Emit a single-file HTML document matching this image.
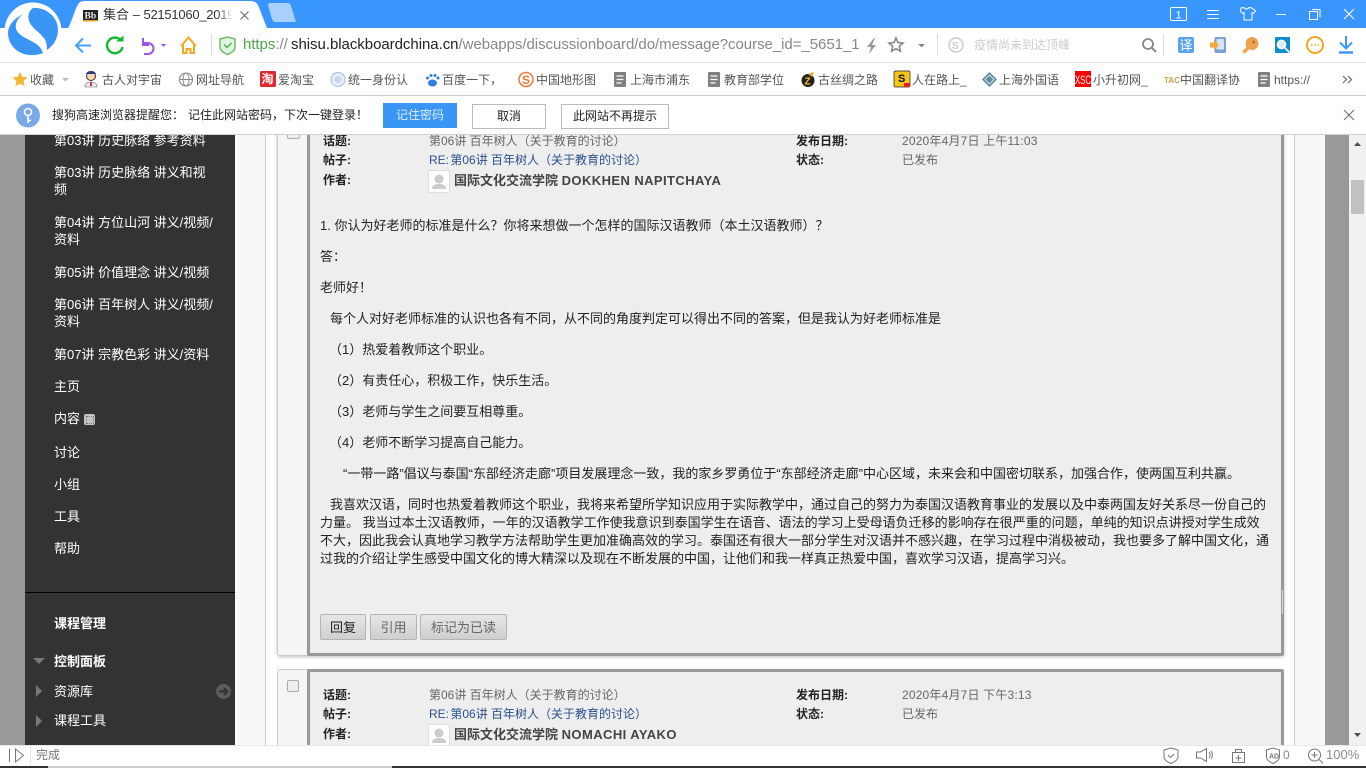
<!DOCTYPE html>
<html><head><meta charset="utf-8">
<style>
html,body{margin:0;padding:0;width:1366px;height:768px;overflow:hidden;background:#fff}
body{font-family:"Liberation Sans","Noto Sans CJK SC",sans-serif;font-size:12px;color:#333;position:relative}
.a,.t{position:absolute}
.t{white-space:nowrap;line-height:18px}
#page{position:absolute;left:0;top:135px;width:1366px;height:610px;overflow:hidden;background:#fff}
#in{position:absolute;left:0;top:-135px;width:1366px;height:768px}
.s{color:#fff;font-size:13px;left:54px}
.b{font-weight:bold}
.m{font-size:12px;color:#666}
.h{font-size:12px;color:#222;font-weight:bold;left:323px}
.v{left:429px}
.lnk{color:#2b4f8c}
.p{font-size:13px;color:#222}
.bm{font-size:12px;color:#555;top:71px}
.panel{position:absolute;left:277px;width:1007px;background:#f5f5f5;border-radius:3px}
.btn{position:absolute;top:614px;height:24px;line-height:25px;text-align:center;font-size:13px;color:#666;border:1px solid #b4b4b4;border-radius:2px;background:linear-gradient(#e6e6e6,#cfcfcf)}
.ib{position:absolute;top:104px;height:23px;line-height:23px;text-align:center;font-size:12px;color:#222;border:1px solid #bbb;background:#fff;box-sizing:content-box}
svg{position:absolute;overflow:visible}
</style></head><body>

<div id="page"><div id="in">
  <div class="a" style="left:0;top:135px;width:25px;height:610px;background:#999"></div>
  <div class="a" style="left:25px;top:135px;width:210px;height:610px;background:#333"></div>
  <div class="a" style="left:235px;top:135px;width:30px;height:610px;background:#f8f8f8"></div>
  <div class="a" style="left:265px;top:135px;width:1px;height:610px;background:#ccc"></div>
  <div class="a" style="left:1294px;top:135px;width:1px;height:610px;background:#ccc"></div>
  <div class="a" style="left:1295px;top:135px;width:30px;height:610px;background:#f8f8f8"></div>
  <div class="a" style="left:1325px;top:135px;width:24px;height:610px;background:#999"></div>
  <div class="a" style="left:1349px;top:135px;width:17px;height:610px;background:#f1f1f1"></div>
  <div class="a" style="left:1351px;top:180px;width:13px;height:34px;background:#c1c1c1"></div>
  <svg style="left:0;top:0" width="1366" height="768"><path d="M1354 146l3.500-4 3.500 4z" fill="#505050"/><path d="M1354 733l3.500 4 3.500-4z" fill="#505050"/></svg>

  <div class="t s" style="top:132px">第03讲 历史脉络 参考资料</div>
  <div class="t s" style="top:164px">第03讲 历史脉络 讲义和视</div>
  <div class="t s" style="top:181px">频</div>
  <div class="t s" style="top:214px">第04讲 方位山河 讲义/视频/</div>
  <div class="t s" style="top:231px">资料</div>
  <div class="t s" style="top:264px">第05讲 价值理念 讲义/视频</div>
  <div class="t s" style="top:296px">第06讲 百年树人 讲义/视频/</div>
  <div class="t s" style="top:313px">资料</div>
  <div class="t s" style="top:346px">第07讲 宗教色彩 讲义/资料</div>
  <div class="t s" style="top:378px">主页</div>
  <div class="t s" style="top:410px">内容</div>
  <div class="a" style="left:84px;top:414px;width:11px;height:11px;background:#c4c4c4;border-radius:2px"></div>
  <div class="a" style="left:86px;top:416px;width:6px;height:6px;border:1px dotted #777"></div>
  <div class="t s" style="top:444px">讨论</div>
  <div class="t s" style="top:476px">小组</div>
  <div class="t s" style="top:508px">工具</div>
  <div class="t s" style="top:540px">帮助</div>
  <div class="a" style="left:25px;top:592px;width:210px;height:1px;background:#000"></div>
  <div class="t s b" style="top:615px">课程管理</div>
  <div class="t s b" style="top:653px">控制面板</div>
  <div class="t s" style="top:683px">资源库</div>
  <div class="t s" style="top:712px">课程工具</div>
  <svg style="left:0;top:0" width="300" height="768">
    <path d="M33 658h12l-6 6z" fill="#777"/>
    <path d="M36 685v12l6-6z" fill="#777"/>
    <path d="M36 715v12l6-6z" fill="#777"/>
    <circle cx="223.500" cy="691.500" r="7.500" fill="#5b5b5b"/>
    <path d="M219 691.500h8M224 688l3.500 3.500-3.500 3.500" stroke="#333" stroke-width="2" fill="none"/>
  </svg>

  <!-- card 1 -->
  <div class="panel" style="top:100px;height:556px;box-shadow:0 1px 3px rgba(0,0,0,.25);border:1px solid #ccc;border-top:0;box-sizing:border-box"></div>
  <div class="a" style="left:307px;top:100px;width:977px;height:556px;box-sizing:border-box;border:3px solid #999;background:#eee;border-radius:2px"></div>
  <div class="a" style="left:287px;top:126px;width:11px;height:11px;border:1px solid #aaa;border-radius:2px;background:#eee"></div>
  <div class="a" style="left:1282px;top:590px;width:1px;height:24px;background:#ddd"></div>

  <div class="t h" style="top:132px">话题:</div><div class="t m v" style="top:132px">第06讲 百年树人（关于教育的讨论）</div>
  <div class="t h" style="top:132px;left:796px">发布日期:</div><div class="t m" style="top:132px;left:902px;letter-spacing:.18px">2020年4月7日 上午11:03</div>
  <div class="t h" style="top:151px">帖子:</div><div class="t m v lnk" style="top:151px"><span style="margin-right:-2px">RE:</span> 第06讲 百年树人（关于教育的讨论）</div>
  <div class="t h" style="top:151px;left:796px">状态:</div><div class="t m" style="top:151px;left:902px">已发布</div>
  <div class="t h" style="top:171px">作者:</div>
  <div class="a" style="left:428px;top:170px;width:20px;height:21px;background:#fff;border:1px solid #ddd;border-radius:2px"></div>
  <svg style="left:428px;top:170px" width="22" height="23"><circle cx="11" cy="9" r="4.500" fill="#ccc"/><path d="M4 19c0-4 3-5 7-5s7 1 7 5z" fill="#ccc"/></svg>
  <div class="t b" style="top:172px;left:454px;font-size:13px;color:#444">国际文化交流学院 <span style="letter-spacing:.42px">DOKKHEN NAPITCHAYA</span></div>

  <div class="t p" style="left:320px;top:217px">1. 你认为好老师的标准是什么？你将来想做一个怎样的国际汉语教师（本土汉语教师）？</div>
  <div class="t p" style="left:320px;top:248px">答：</div>
  <div class="t p" style="left:320px;top:279px">老师好！</div>
  <div class="t p" style="left:330px;top:310px">每个人对好老师标准的认识也各有不同，从不同的角度判定可以得出不同的答案，但是我认为好老师标准是</div>
  <div class="t p" style="left:329px;top:341px">（1）热爱着教师这个职业。</div>
  <div class="t p" style="left:329px;top:372px">（2）有责任心，积极工作，快乐生活。</div>
  <div class="t p" style="left:329px;top:403px">（3）老师与学生之间要互相尊重。</div>
  <div class="t p" style="left:329px;top:434px">（4）老师不断学习提高自己能力。</div>
  <div class="t p" style="left:343px;top:465px">“一带一路”倡议与泰国“东部经济走廊”项目发展理念一致，我的家乡罗勇位于“东部经济走廊”中心区域，未来会和中国密切联系，加强合作，使两国互利共赢。</div>
  <div class="t p" style="left:330px;top:496px">我喜欢汉语，同时也热爱着教师这个职业，我将来希望所学知识应用于实际教学中，通过自己的努力为泰国汉语教育事业的发展以及中泰两国友好关系尽一份自己的</div>
  <div class="t p" style="left:320px;top:514px">力量。 我当过本土汉语教师，一年的汉语教学工作使我意识到泰国学生在语音、语法的学习上受母语负迁移的影响存在很严重的问题，单纯的知识点讲授对学生成效</div>
  <div class="t p" style="left:320px;top:532px">不大，因此我会认真地学习教学方法帮助学生更加准确高效的学习。泰国还有很大一部分学生对汉语并不感兴趣，在学习过程中消极被动，我也要多了解中国文化，通</div>
  <div class="t p" style="left:320px;top:550px">过我的介绍让学生感受中国文化的博大精深以及现在不断发展的中国，让他们和我一样真正热爱中国，喜欢学习汉语，提高学习兴。</div>

  <div class="btn" style="left:320px;width:44px;color:#222">回复</div>
  <div class="btn" style="left:370px;width:45px">引用</div>
  <div class="btn" style="left:420px;width:85px">标记为已读</div>

  <!-- card 2 -->
  <div class="panel" style="top:669px;height:120px;border:1px solid #ccc;box-sizing:border-box"></div>
  <div class="a" style="left:307px;top:669px;width:977px;height:120px;box-sizing:border-box;border:3px solid #999;background:#eee;border-radius:2px"></div>
  <div class="a" style="left:287px;top:680px;width:10px;height:10px;border:1px solid #aaa;border-radius:2px;background:#eee"></div>
  <div class="t h" style="top:686px">话题:</div><div class="t m v" style="top:686px">第06讲 百年树人（关于教育的讨论）</div>
  <div class="t h" style="top:686px;left:796px">发布日期:</div><div class="t m" style="top:686px;left:902px;letter-spacing:.18px">2020年4月7日 下午3:13</div>
  <div class="t h" style="top:705px">帖子:</div><div class="t m v lnk" style="top:705px"><span style="margin-right:-2px">RE:</span> 第06讲 百年树人（关于教育的讨论）</div>
  <div class="t h" style="top:705px;left:796px">状态:</div><div class="t m" style="top:705px;left:902px">已发布</div>
  <div class="t h" style="top:725px">作者:</div>
  <div class="a" style="left:428px;top:724px;width:20px;height:21px;background:#fff;border:1px solid #ddd;border-radius:2px"></div>
  <svg style="left:428px;top:724px" width="22" height="23"><circle cx="11" cy="9" r="4.500" fill="#ccc"/><path d="M4 19c0-4 3-5 7-5s7 1 7 5z" fill="#ccc"/></svg>
  <div class="t b" style="top:726px;left:454px;font-size:13px;color:#444">国际文化交流学院 <span style="letter-spacing:.42px">NOMACHI AYAKO</span></div>
</div></div>

<!-- chrome -->
<div class="a" style="left:0;top:0;width:1366px;height:28px;background:#3a96ff"></div>
<div class="a" style="left:0;top:28px;width:1366px;height:34px;background:#fff"></div>
<div class="a" style="left:0;top:62px;width:1366px;height:1px;background:#e0e0e0"></div>
<div class="a" style="left:0;top:63px;width:1366px;height:32px;background:#fff"></div>
<div class="a" style="left:0;top:95px;width:1366px;height:1px;background:#ccc"></div>
<div class="a" style="left:0;top:96px;width:1366px;height:38px;background:#fff"></div>
<div class="a" style="left:0;top:134px;width:1366px;height:1px;background:#d0d0d0"></div>

<svg style="left:0;top:0" width="1366" height="135">
  <path d="M68 28C72 22 75 8 79 3Q81 1 85 1H250Q256 1 258 5L267 28z" fill="#fff"/>
  <path d="M268 5Q268 3 271 3H288Q290 3 291 6L296 22H275Q273 22 272 19z" fill="#a9d0ff"/>
  <!-- logo -->
  <circle cx="33" cy="31" r="28.500" fill="#fff"/>
  <path d="M33 8C46 7 58 17 58 30C58 38 54 45 47 50C47 44 46 40 43 37C39 32 35 30 32 26C27 20 27 12 33 8z" fill="#3a96f5"/>
  <path d="M23 14C13 19 8 26 8 33C8 46 19 55 31 55C36 55 40 54.500 43 53C41 47 37 44 33 42C26 38 20 36 17 31C14 25 17 19 23 14z" fill="#3a96f5"/>
  <!-- bb favicon -->
  <rect x="83" y="10" width="15" height="11" fill="#222"/><rect x="83" y="20" width="15" height="1.500" fill="#e8a020"/>
  <text x="84.500" y="18.500" font-size="9.500" font-weight="bold" fill="#eee" font-family="Liberation Serif">Bb</text>
  <!-- tab x -->
  <path d="M240.500 11.500l8 8M248.500 11.500l-8 8" stroke="#666" stroke-width="1"/>
  <!-- nav -->
  <path d="M76 45.500h15M83 38.500l-7 7 7 7" stroke="#4c9df5" stroke-width="2" fill="none"/>
  <path d="M120.500 40A7.800 7.800 0 1 0 122.500 47" stroke="#12b82e" stroke-width="2.400" fill="none"/>
  <path d="M116 41.500h7.500v-6z" fill="#12b82e"/>
  <path d="M142 43h6a5.500 5.500 0 1 1 0 11h-4" stroke="#a052ee" stroke-width="2" fill="none"/>
  <path d="M143 38v7h6" stroke="#a052ee" stroke-width="2" fill="none"/>
  <path d="M161 44h5l-2.500 3z" fill="#a052ee"/>
  <path d="M181 46l7.500-8.500 7.500 8.500M183 44v9h3.500v-4h4v4h3.500V44" stroke="#f5a623" stroke-width="2" fill="none"/>
  <rect x="211" y="34" width="1" height="22" fill="#ddd"/>
  <path d="M220 39l7.500-2 7.500 2v8c0 4-4 6-7.500 7.500C224 53 220 51 220 47z" fill="#dff5df" stroke="#72bc6d" stroke-width="1.500"/>
  <path d="M224 44.500l3 3 4.500-4.500" stroke="#4fae4a" stroke-width="1.500" fill="none"/>
  <!-- bolt star -->
  <path d="M874 38l-7 9h4l-2 7 7-9h-4l3-7z" fill="#999"/>
  <path d="M896 38l2 4.500 5 .5-3.700 3.300 1 4.900-4.300-2.500-4.300 2.500 1-4.900-3.700-3.300 5-.5z" fill="none" stroke="#888" stroke-width="1.600"/>
  <path d="M918 44h7l-3.500 3.500z" fill="#888"/>
  <rect x="937" y="34" width="1" height="22" fill="#ddd"/>
  <circle cx="956" cy="45" r="7" fill="none" stroke="#ccc" stroke-width="1.500"/>
  <text x="952" y="49" font-size="10" font-weight="bold" fill="#ccc" font-family="Liberation Sans">S</text>
  <circle cx="1148" cy="44" r="5" fill="none" stroke="#888" stroke-width="1.800"/>
  <path d="M1152 48l4 4" stroke="#888" stroke-width="2"/>
  <rect x="1163" y="34" width="1" height="22" fill="#ddd"/>
  <rect x="1178" y="37" width="16" height="16" rx="2" fill="#5aa3ef"/>
  <text x="1179.500" y="50" font-size="13" fill="#fff" font-family="Noto Sans CJK SC">译</text>
  <rect x="1214.500" y="37" width="11.500" height="16" rx="1.500" fill="#7a9ed6"/><rect x="1216.500" y="39" width="7.500" height="10.500" fill="#d5e3f6"/>
  <path d="M1210 42.500h4v-2.500l5 5-5 5v-2.500h-4z" fill="#f5a83a"/>
  <path d="M1249 47l-5.500 5.500" stroke="#eea24a" stroke-width="3.400"/>
  <circle cx="1252" cy="43.500" r="6.500" fill="#eea24a"/><circle cx="1253.500" cy="42" r="1.400" fill="#b5722b"/>
  <rect x="1275" y="37" width="15" height="16" rx="1" fill="#0e8ccd"/><circle cx="1281.500" cy="44.500" r="4.200" fill="#dceefa" stroke="#fff" stroke-width="1.300"/><path d="M1285 48l4.500 4.500" stroke="#fff" stroke-width="1.700"/>
  <circle cx="1315" cy="45" r="8" fill="#fff" stroke="#f5a623" stroke-width="2"/><path d="M1311 45h1.500M1314.300 45h1.500M1317.600 45h1.500" stroke="#f5a623" stroke-width="1.500"/>
  <path d="M1346 36v12M1340 42.500l6 6 6-6" stroke="#3a96ff" stroke-width="2" fill="none"/><path d="M1339 52.500h14" stroke="#3a96ff" stroke-width="2.400"/>
  <!-- win controls -->
  <rect x="1170.500" y="7.500" width="16" height="13" rx="1" fill="none" stroke="#fff"/>
  <text x="1175.500" y="18.500" font-size="11" fill="#fff" font-family="Liberation Sans">1</text>
  <path d="M1207 10.500h12M1207 14.500h12M1207 18.500h12" stroke="#fff"/>
  <path d="M1241 8l3-0.500c1 2 4 2 5 0l3 .5 3.500 3-2 2.500-1.500-1V20h-8v-7.500l-1.500 1-2-2.500z" fill="none" stroke="#fff"/>
  <path d="M1276 14.500h10" stroke="#fff"/>
  <rect x="1309.500" y="11.500" width="8" height="8" fill="none" stroke="#fff"/><path d="M1312 9.500h8v8" fill="none" stroke="#fff"/>
  <path d="M1344 9l10 10M1354 9l-10 10" stroke="#fff" stroke-width="1.100"/>
  <!-- bookmark icons -->
  <path d="M20 72l2.300 4.700 5.200.7-3.800 3.600.9 5.100-4.600-2.400-4.600 2.400.9-5.100-3.800-3.600 5.200-.7z" fill="#f5b731"/>
  <path d="M62 78h7l-3.500 3.500z" fill="#bbb"/>
  <circle cx="91" cy="76" r="4.500" fill="#f6d7b0" stroke="#334"/><path d="M86 74c1-4 9-4 10 0z" fill="#2a3a80"/><path d="M85 87c0-4 3-5 6-5s6 1 6 5z" fill="#e8e8ee" stroke="#666" stroke-width=".6"/><rect x="90" y="82" width="2" height="4" fill="#d33"/>
  <circle cx="186" cy="79.500" r="6.500" fill="none" stroke="#888" stroke-width="1.100"/><ellipse cx="186" cy="79.500" rx="3" ry="6.500" fill="none" stroke="#888"/><path d="M179.500 79.500h13" stroke="#888"/>
  <rect x="260" y="71" width="16" height="16" rx="1.500" fill="#e0282e"/>
  <text x="261.500" y="83" font-size="12" font-weight="bold" fill="#fff" font-family="Noto Sans CJK SC">淘</text>
  <circle cx="338" cy="79.500" r="7" fill="#e8eefb" stroke="#a6b7dc"/><circle cx="338" cy="79.500" r="3.500" fill="#c8d4ee"/>
  <g fill="#2f7fe8"><ellipse cx="432.500" cy="83" rx="4.500" ry="3.500"/><circle cx="427.500" cy="78" r="1.500"/><circle cx="431" cy="75.500" r="1.500"/><circle cx="435" cy="75.500" r="1.500"/><circle cx="438" cy="78" r="1.500"/></g>
  <circle cx="526" cy="79.500" r="7" fill="#fff" stroke="#f2773a" stroke-width="1.500"/><text x="522" y="84" font-size="12" font-weight="bold" fill="#f2773a" font-family="Liberation Sans">S</text>
  <rect x="614" y="72" width="12" height="15" rx="1" fill="#808080"/><path d="M616.500 76h7M616.500 79.500h7M616.500 83h5" stroke="#fff" stroke-width="1.200"/>
  <rect x="708" y="72" width="12" height="15" rx="1" fill="#808080"/><path d="M710.500 76h7M710.500 79.500h7M710.500 83h5" stroke="#fff" stroke-width="1.200"/>
  <circle cx="808" cy="80.500" r="6.500" fill="#222"/><path d="M808 74l6-2-2 5z" fill="#f2a020"/><text x="804.500" y="84.500" font-size="10" font-weight="bold" fill="#f5c518" font-family="Liberation Sans">Z</text>
  <rect x="894" y="71" width="16" height="16" rx="1.500" fill="#f5c518" stroke="#222" stroke-width=".7"/><text x="898" y="82" font-size="11" font-weight="bold" fill="#111" font-family="Liberation Sans">S</text><rect x="904" y="83" width="6" height="4" fill="#e02020"/>
  <path d="M989.500 72l7.500 7.500-7.500 7.500-7.500-7.500z" fill="#5d8a9c"/><path d="M989.500 75l4.500 4.500-4.500 4.500-4.500-4.500z" fill="none" stroke="#d5e4e8"/>
  <rect x="1075" y="71" width="16" height="16" fill="#f00"/>
  <text x="1075" y="84" font-size="12" fill="#fff" font-family="Liberation Sans" textLength="16" lengthAdjust="spacingAndGlyphs">XSC</text>
  <text x="1164" y="83" font-size="8" font-weight="bold" fill="#c9a24a" font-family="Liberation Sans">TAC</text>
  <rect x="1258" y="72" width="12" height="15" rx="1" fill="#808080"/><path d="M1260.500 76h7M1260.500 79.500h7M1260.500 83h5" stroke="#fff" stroke-width="1.200"/>
  <path d="M1343 76l3.500 3.500-3.500 3.500M1348 76l3.500 3.500-3.500 3.500" stroke="#666" fill="none" stroke-width="1.200"/>
  <!-- info bar -->
  <circle cx="28" cy="115.500" r="12" fill="#7aa9e8"/>
  <circle cx="28" cy="112" r="3.500" fill="none" stroke="#fff" stroke-width="1.600"/><path d="M28 115.500v7.500M28 120.500h3" stroke="#fff" stroke-width="1.600"/>
  <path d="M1344 110l10 10M1354 110l-10 10" stroke="#666" stroke-width="1"/>
</svg>

<div class="t" style="left:103px;top:6px;font-size:13px;color:#333;width:130px;overflow:hidden;-webkit-mask-image:linear-gradient(90deg,#000 88%,transparent)">集合 – <span style="letter-spacing:-.25px">52151060_2019</span></div>
<div class="t" style="left:243px;top:36px;font-size:15px;color:#888;letter-spacing:-.04px"><span style="display:inline-block;width:48px"><span style="color:#4aa84a">https</span>://</span><span style="color:#222">shisu.blackboardchina.cn</span>/webapps/discussionboard/do/message?course_id=_5651_1</div>
<div class="t" style="left:974px;top:36px;font-size:12px;color:#ccc">疫情尚未到达顶峰</div>

<div class="t bm" style="left:30px">收藏</div>
<div class="t bm" style="left:102px">古人对宇宙</div>
<div class="t bm" style="left:196px">网址导航</div>
<div class="t bm" style="left:278px">爱淘宝</div>
<div class="t bm" style="left:348px">统一身份认</div>
<div class="t bm" style="left:442px">百度一下，</div>
<div class="t bm" style="left:536px">中国地形图</div>
<div class="t bm" style="left:630px">上海市浦东</div>
<div class="t bm" style="left:724px">教育部学位</div>
<div class="t bm" style="left:818px">古丝绸之路</div>
<div class="t bm" style="left:912px">人在路上_</div>
<div class="t bm" style="left:999px">上海外国语</div>
<div class="t bm" style="left:1093px">小升初网_</div>
<div class="t bm" style="left:1180px">中国翻译协</div>
<div class="t bm" style="left:1274px">https://</div>

<div class="t" style="left:52px;top:106px;font-size:12px;color:#222">搜狗高速浏览器提醒您：</div>
<div class="t" style="left:188px;top:106px;font-size:12px;color:#222">记住此网站密码，下次一键登录！</div>
<div class="a" style="left:383px;top:103px;width:74px;height:25px;line-height:25px;text-align:center;background:#3a96f5;color:#dbeaff;font-size:12px">记住密码</div>
<div class="ib" style="left:472px;width:72px">取消</div>
<div class="ib" style="left:561px;width:106px">此网站不再提示</div>

<!-- status bar -->
<div class="a" style="left:0;top:745px;width:1366px;height:21px;background:#fff;border-top:1px solid #e8e8e8;box-sizing:border-box"></div>
<div class="a" style="left:0;top:766px;width:1366px;height:2px;background:#333"></div>
<div class="a" style="left:48px;top:766px;width:344px;height:2px;background:#ccc"></div>
<div class="a" style="left:30px;top:746px;width:1px;height:19px;background:#e6e6e6"></div>
<div class="t" style="left:36px;top:746px;font-size:12px;color:#777">完成</div>
<div class="t" style="left:1283px;top:746px;font-size:12px;color:#888">0</div>
<div class="t" style="left:1326px;top:746px;font-size:13px;color:#888">100%</div>
<svg style="left:0;top:0" width="1366" height="768">
  <path d="M9.500 749v13M15.500 749v13l8-6.500z" fill="none" stroke="#777"/>
  <path d="M1164 750l7-2 7 2v7c0 3-3.500 5-7 6.500-3.500-1.500-7-3.500-7-6.500z" fill="none" stroke="#777"/><path d="M1168 755l2.500 2.500 3.500-3.500" stroke="#777" fill="none"/>
  <path d="M1196.500 752h4l6-3.500v13l-6-3.500h-4zM1209 752c1.500 2 1.500 4 0 6M1211 751c2 3 2 5 0 8" fill="none" stroke="#777"/>
  <rect x="1232.500" y="752.500" width="12" height="10" fill="none" stroke="#777"/><path d="M1235.500 752.500v-3h6v3M1238.500 755v6M1235.500 758h6" fill="none" stroke="#777"/>
  <path d="M1266.500 750l6.500-2 6.500 2v7c0 3-3 5-6.500 6.500-3.500-1.500-6.500-3.500-6.500-6.500z" fill="none" stroke="#777"/>
  <text x="1269" y="758.500" font-size="7" fill="#777" font-family="Liberation Sans" font-weight="bold">AD</text>
  <circle cx="1314.500" cy="755" r="6" fill="none" stroke="#777"/><path d="M1311.500 755h6M1314.500 752v6M1319 759.500l4 4" stroke="#777" fill="none"/>
</svg>
</body></html>
